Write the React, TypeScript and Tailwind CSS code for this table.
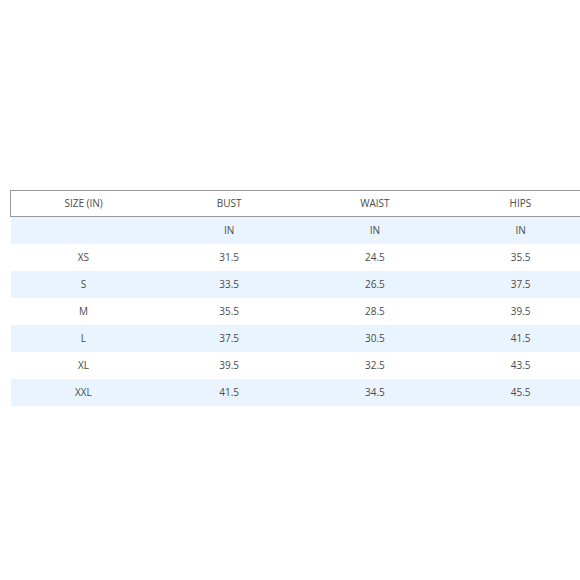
const rows = [
  { size: "", bust: "IN", waist: "IN", hips: "IN" },
  { size: "XS", bust: "31.5", waist: "24.5", hips: "35.5" },
  { size: "S", bust: "33.5", waist: "26.5", hips: "37.5" },
  { size: "M", bust: "35.5", waist: "28.5", hips: "39.5" },
  { size: "L", bust: "37.5", waist: "30.5", hips: "41.5" },
  { size: "XL", bust: "39.5", waist: "32.5", hips: "43.5" },
  { size: "XXL", bust: "41.5", waist: "34.5", hips: "45.5" },
];

export default function App() {
  return (
    <div className="w-[580px] h-[580px] overflow-hidden bg-white pt-[190px] pl-[10px] font-['Open_Sans',sans-serif] text-[10px] text-[#4a4a4a]">
      <table className="w-[584px] table-fixed border-collapse">
        <thead>
          <tr className="h-[26px] border border-[#999]">
            <th className="font-normal">SIZE (IN)</th>
            <th className="font-normal">BUST</th>
            <th className="font-normal">WAIST</th>
            <th className="font-normal">HIPS</th>
          </tr>
        </thead>
        <tbody>
          {rows.map((r, i) => (
            <tr
              key={i}
              className={`h-[27px] text-center ${i % 2 === 0 ? "bg-[#eaf4fe]" : "bg-white"}`}
            >
              <td>{r.size}</td>
              <td>{r.bust}</td>
              <td>{r.waist}</td>
              <td>{r.hips}</td>
            </tr>
          ))}
        </tbody>
      </table>
    </div>
  );
}
